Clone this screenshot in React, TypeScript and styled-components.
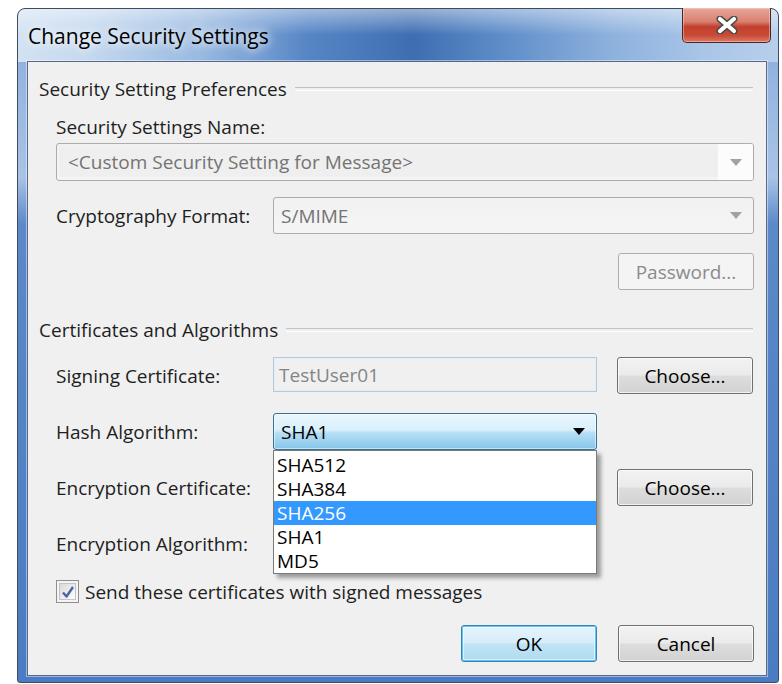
import React from 'react';
import styled, { createGlobalStyle } from 'styled-components';

const GlobalStyle = createGlobalStyle`
  html, body {
    margin: 0;
    padding: 0;
    background: #ffffff;
  }
  body {
    font-family: 'Open Sans', 'Noto Sans', sans-serif;
    font-size: 19px;
    color: #1e1e1e;
  }
  * { box-sizing: border-box; }
`;

const Page = styled.div`
  padding: 8px 0 0 17px;
`;

const Window = styled.div`
  width: 762px;
  height: 675px;
  border: 1px solid #3f4c5e;
  border-radius: 8px 8px 3px 3px;
  padding: 0 11px 6px 9px;
  display: flex;
  flex-direction: column;
  background:
    linear-gradient(180deg, rgba(255, 255, 255, 0.45) 0, rgba(255, 255, 255, 0) 26px) no-repeat,
    linear-gradient(90deg, #d3e2f3 0%, #c3d7ee 10%, #98b9e1 24%, #5786c6 38%, #3e6eb1 52%, #5c8bc8 63%, #8db1dd 78%, #a9c5e7 90%, #b8cfeb 100%) 0 0 / 100% 53px no-repeat,
    linear-gradient(180deg, #87aadb 0%, #a9c3e6 25%, #5b89c9 32%, #4b7bc2 100%);
`;

const TitleBar = styled.div`
  height: 52px;
  display: flex;
  justify-content: space-between;
  align-items: flex-start;
`;

const Title = styled.div`
  margin: 13px 0 0 1px;
  font-size: 21px;
  line-height: 28px;
  color: #000000;
  text-shadow: 0 0 8px rgba(255, 255, 255, 0.95), 0 0 14px rgba(255, 255, 255, 0.9);
`;

const CloseButton = styled.div`
  width: 89px;
  height: 35px;
  margin: -1px -4px 0 0;
  border: 1px solid #4c2426;
  border-top: none;
  border-radius: 0 0 5px 5px;
  display: flex;
  align-items: center;
  justify-content: center;
  background: linear-gradient(180deg, #e6a79b 0%, #d98070 40%, #c1402d 55%, #c84a36 80%, #dc7a63 100%);
  box-shadow: inset 0 0 0 1px rgba(255, 220, 210, 0.45);
`;

const Client = styled.div`
  flex: 1;
  background: #f0f0f0;
  border: 1px solid #56698a;
  box-shadow: 0 0 0 1px rgba(255, 255, 255, 0.45);
  padding: 0 12px 0 11px;
  display: flex;
  flex-direction: column;
`;

const GroupHeader = styled.div<{ $top: number }>`
  margin-top: ${({ $top }) => $top}px;
  height: 20px;
  display: flex;
  align-items: center;
  gap: 8px;
  line-height: 20px;
  white-space: nowrap;

  &::after {
    content: '';
    flex: 1;
    height: 2px;
    margin-right: 1px;
    border-top: 1px solid #c2c2c2;
    border-bottom: 1px solid #ffffff;
  }
`;

const GroupBody = styled.div`
  padding-left: 17px;
  display: flex;
  flex-direction: column;
`;

const FieldLabel = styled.div<{ $top?: number }>`
  margin-top: ${({ $top }) => $top ?? 0}px;
  line-height: 22px;
  white-space: nowrap;
`;

const FormGrid = styled.div<{ $top: number }>`
  margin-top: ${({ $top }) => $top}px;
  display: grid;
  grid-template-columns: 197px 324px 137px;
  column-gap: 20px;
  grid-auto-rows: 37px;
  row-gap: 19px;
  align-items: center;
`;

const RowLabel = styled.div`
  line-height: 22px;
  white-space: nowrap;
`;

const Combo = styled.div<{ $wide?: boolean; $height?: number }>`
  grid-column: ${({ $wide }) => ($wide ? '2 / 4' : 'auto')};
  height: ${({ $height }) => $height ?? 37}px;
  border: 1px solid #acacac;
  border-radius: 3px;
  display: flex;
  align-items: stretch;
  background: linear-gradient(180deg, #f1f1f1 0%, #f5f5f5 100%);
  color: #747474;
`;

const ComboText = styled.div<{ $inset?: boolean }>`
  flex: 1;
  display: flex;
  align-items: center;
  padding-left: ${({ $inset }) => ($inset ? 9 : 7)}px;
  margin: ${({ $inset }) => ($inset ? '3px 0 3px 2px' : '0')};
  background: ${({ $inset }) => ($inset ? '#efefef' : 'transparent')};
  white-space: nowrap;
  overflow: hidden;
`;

const ArrowBox = styled.div<{ $white?: boolean }>`
  width: 35px;
  display: flex;
  align-items: center;
  justify-content: center;
  border-radius: 0 2px 2px 0;
  background: ${({ $white }) => ($white ? '#fcfcfc' : 'transparent')};
`;

const Arrow = styled.div<{ $color: string }>`
  width: 0;
  height: 0;
  border-left: 6px solid transparent;
  border-right: 6px solid transparent;
  border-top: 7px solid ${({ $color }) => $color};
`;

const FocusCombo = styled.div`
  position: relative;
  height: 37px;
`;

const FocusShell = styled.div`
  height: 37px;
  border: 1px solid #3c6f95;
  border-radius: 3px;
  display: flex;
  align-items: stretch;
  color: #000000;
  background: linear-gradient(180deg, #eaf6fd 0%, #d9f0fc 45%, #b5def5 55%, #86c6ea 100%);
  box-shadow: inset 0 0 0 1px rgba(255, 255, 255, 0.5);
`;

const DropList = styled.div`
  position: absolute;
  top: 37px;
  left: 0;
  width: 324px;
  height: 124px;
  z-index: 2;
  background: #ffffff;
  border: 1px solid #7a7a7a;
  padding-top: 2px;
  box-shadow: 4px 4px 4px rgba(0, 0, 0, 0.35);
`;

const DropItem = styled.div<{ $selected?: boolean }>`
  height: 24px;
  line-height: 24px;
  padding-left: 3px;
  color: ${({ $selected }) => ($selected ? '#ffffff' : '#000000')};
  background: ${({ $selected }) => ($selected ? '#3399ff' : 'transparent')};
`;

const TextBox = styled.div`
  height: 35px;
  align-self: start;
  border: 1px solid #b3c9dd;
  background: #f0f0f0;
  color: #858585;
  display: flex;
  align-items: center;
  padding-left: 5px;
  box-shadow: inset 0 0 0 1px #e6edf3;
`;

const Button = styled.button<{ $variant?: 'normal' | 'disabled' | 'default' }>`
  height: 37px;
  width: 136px;
  padding: 0;
  font-family: inherit;
  font-size: 19px;
  border-radius: 3px;
  cursor: default;
  ${({ $variant }) => {
    switch ($variant) {
      case 'disabled':
        return `
          border: 1px solid #adadad;
          background: #f4f4f4;
          color: #8b8b8b;
        `;
      case 'default':
        return `
          border: 1px solid #3c7fb1;
          background: linear-gradient(180deg, #e5f4fc 0%, #d5ecf9 48%, #c0e3f5 52%, #b0dbf1 100%);
          box-shadow: inset 0 0 0 1px #5cc8f7, inset 0 0 0 2px rgba(255, 255, 255, 0.5);
          color: #000000;
        `;
      default:
        return `
          border: 1px solid #707070;
          background: linear-gradient(180deg, #f2f2f2 0%, #ebebeb 48%, #dddddd 52%, #d2d2d2 100%);
          box-shadow: inset 0 0 0 1px rgba(255, 255, 255, 0.7);
          color: #000000;
        `;
    }
  }}
`;

const RightRow = styled.div<{ $top: number }>`
  margin-top: ${({ $top }) => $top}px;
  display: flex;
  justify-content: flex-end;
  gap: 21px;
`;

const CheckRow = styled.label`
  margin-top: 18px;
  display: flex;
  align-items: center;
  gap: 6px;
  height: 23px;
  line-height: 22px;
  white-space: nowrap;
`;

const CheckBox = styled.span`
  width: 23px;
  height: 23px;
  border: 1px solid #8f8f8f;
  background: #f4f4f4;
  display: flex;
  align-items: center;
  justify-content: center;
`;

const CheckInner = styled.span`
  width: 17px;
  height: 17px;
  border: 1px solid #c4c4c4;
  background: linear-gradient(135deg, #dadada 0%, #f2f2f2 70%, #ffffff 100%);
  display: flex;
  align-items: center;
  justify-content: center;
`;

const hashOptions = ['SHA512', 'SHA384', 'SHA256', 'SHA1', 'MD5'];

const CloseGlyph = () => (
  <svg width="22" height="18" viewBox="0 0 22 18">
    <path d="M4 3 L18 15 M18 3 L4 15" stroke="#4a4a4a" strokeWidth="7" strokeLinecap="round" />
    <path d="M4 3 L18 15 M18 3 L4 15" stroke="#ffffff" strokeWidth="4.2" strokeLinecap="round" />
  </svg>
);

const CheckMark = () => (
  <svg width="14" height="14" viewBox="0 0 14 14">
    <path d="M2 7.5 L5.5 11.5 L12 2" fill="none" stroke="#4b64a6" strokeWidth="2.4" strokeLinejoin="round" />
  </svg>
);

const App: React.FC = () => {
  return (
    <Page>
      <GlobalStyle />
      <Window>
        <TitleBar>
          <Title>Change Security Settings</Title>
          <CloseButton>
            <CloseGlyph />
          </CloseButton>
        </TitleBar>

        <Client>
          <GroupHeader $top={17}>Security Setting Preferences</GroupHeader>
          <GroupBody>
            <FieldLabel $top={17}>Security Settings Name:</FieldLabel>
            <Combo $height={38} style={{ marginTop: 5 }}>
              <ComboText $inset>&lt;Custom Security Setting for Message&gt;</ComboText>
              <ArrowBox $white>
                <Arrow $color="#a2a2a2" />
              </ArrowBox>
            </Combo>
            <FormGrid $top={16}>
              <RowLabel>Cryptography Format:</RowLabel>
              <Combo $wide>
                <ComboText>S/MIME</ComboText>
                <ArrowBox>
                  <Arrow $color="#a2a2a2" />
                </ArrowBox>
              </Combo>
            </FormGrid>
            <RightRow $top={19}>
              <Button $variant="disabled">Password...</Button>
            </RightRow>
          </GroupBody>

          <GroupHeader $top={30}>Certificates and Algorithms</GroupHeader>
          <GroupBody>
            <FormGrid $top={17}>
              <RowLabel>Signing Certificate:</RowLabel>
              <TextBox>TestUser01</TextBox>
              <Button>Choose...</Button>

              <RowLabel>Hash Algorithm:</RowLabel>
              <FocusCombo>
                <FocusShell>
                  <ComboText>SHA1</ComboText>
                  <ArrowBox>
                    <Arrow $color="#000000" />
                  </ArrowBox>
                </FocusShell>
                <DropList>
                  {hashOptions.map((opt) => (
                    <DropItem key={opt} $selected={opt === 'SHA256'}>
                      {opt}
                    </DropItem>
                  ))}
                </DropList>
              </FocusCombo>
              <span />

              <RowLabel>Encryption Certificate:</RowLabel>
              <span />
              <Button>Choose...</Button>

              <RowLabel>Encryption Algorithm:</RowLabel>
              <Combo>
                <ComboText />
                <ArrowBox>
                  <Arrow $color="#000000" />
                </ArrowBox>
              </Combo>
              <span />
            </FormGrid>

            <CheckRow>
              <CheckBox>
                <CheckInner>
                  <CheckMark />
                </CheckInner>
              </CheckBox>
              Send these certificates with signed messages
            </CheckRow>
          </GroupBody>

          <RightRow $top={22}>
            <Button $variant="default">OK</Button>
            <Button>Cancel</Button>
          </RightRow>
        </Client>
      </Window>
    </Page>
  );
};

export default App;
